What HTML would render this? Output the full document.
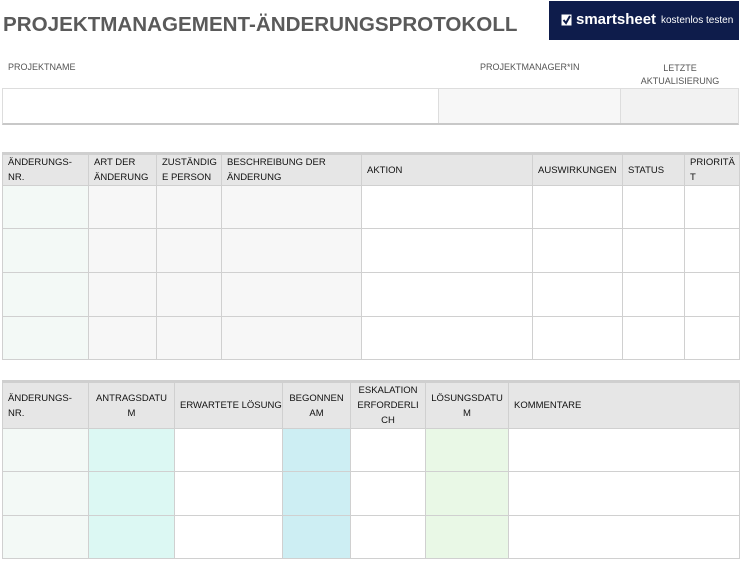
<!DOCTYPE html><html><head><meta charset="utf-8"><style>
body{margin:0;width:742px;height:561px;background:#fff;position:relative;overflow:hidden;font-family:"Liberation Sans",sans-serif;}
.a{position:absolute;box-sizing:border-box;}
.t{position:absolute;left:3px;top:13px;font-size:20.6px;font-weight:bold;color:#5a5a5a;white-space:nowrap;}
.lbl{position:absolute;font-size:9px;color:#555;}
table{position:absolute;border-collapse:collapse;table-layout:fixed;}
td{border:1px solid #d0d0d0;padding:0 0 0 5px;box-sizing:border-box;vertical-align:middle;font-size:9px;color:#222;line-height:15px;}
th{border:1px solid #d0d0d0;background:#e6e6e6;font-size:9.5px;font-weight:normal;color:#111;line-height:15px;text-align:left;padding:0 0 0 5px;vertical-align:middle;}
.g1{background:#f3f9f6}.g2{background:#f7f7f7}.c1{background:#dcf8f3}.c2{background:#cdeef3}.c3{background:#e9f8e6}
</style></head><body>
<div class="t">PROJEKTMANAGEMENT-ÄNDERUNGSPROTOKOLL</div>
<div class="a" style="left:549px;top:1px;width:190px;height:39px;background:#0e1c4b;color:#fff;">
<svg class="a" style="left:12px;top:13px" width="11" height="12" viewBox="0 0 11 12"><rect x="0.5" y="0.5" width="10" height="11" fill="#fff"/><path d="M2.5 6 L5 9 L9 2" stroke="#0e1c4b" stroke-width="2" fill="none"/></svg>
<span class="a" style="left:27px;top:10px;font-size:15px;font-weight:bold;">smartsheet</span>
<span class="a" style="left:112px;top:14px;font-size:10px;">kostenlos testen</span></div>
<div class="lbl" style="left:8px;top:62px">PROJEKTNAME</div>
<div class="lbl" style="left:480px;top:62px">PROJEKTMANAGER*IN</div>
<div class="lbl" style="left:620px;top:62px;width:120px;text-align:center;line-height:13px">LETZTE<br>AKTUALISIERUNG</div>
<div class="a" style="left:2px;top:88px;width:737px;height:37px;border:1px solid #ddd;border-bottom:2px solid #c8c8c8"></div>
<div class="a" style="left:438px;top:89px;width:182px;height:34px;background:#f7f7f7;border-left:1px solid #ddd"></div>
<div class="a" style="left:620px;top:89px;width:118px;height:34px;background:#f2f2f2;border-left:1px solid #ddd"></div>

<table style="left:2px;top:152px;width:737px;border-top:3px solid #cfcfcf">
<colgroup><col style="width:86px"><col style="width:68px"><col style="width:65px"><col style="width:140px"><col style="width:171px"><col style="width:90px"><col style="width:62px"><col style="width:55px"></colgroup>
<tr style="height:31px"><th>ÄNDERUNGS-<br>NR.</th><th>ART DER<br>ÄNDERUNG</th><th>ZUSTÄNDIG<br>E PERSON</th><th>BESCHREIBUNG DER<br>ÄNDERUNG</th><th>AKTION</th><th>AUSWIRKUNGEN</th><th>STATUS</th><th>PRIORITÄ<br>T</th></tr>
<tr style="height:43px"><td class="g1"></td><td class="g2"></td><td class="g2"></td><td class="g2"></td><td></td><td></td><td></td><td></td></tr>
<tr style="height:44px"><td class="g1"></td><td class="g2"></td><td class="g2"></td><td class="g2"></td><td></td><td></td><td></td><td></td></tr>
<tr style="height:44px"><td class="g1"></td><td class="g2"></td><td class="g2"></td><td class="g2"></td><td></td><td></td><td></td><td></td></tr>
<tr style="height:43px"><td class="g1"></td><td class="g2"></td><td class="g2"></td><td class="g2"></td><td></td><td></td><td></td><td></td></tr>
</table>

<table style="left:2px;top:380px;width:737px;border-top:3px solid #cfcfcf">
<colgroup><col style="width:86px"><col style="width:86px"><col style="width:108px"><col style="width:68px"><col style="width:75px"><col style="width:83px"><col style="width:231px"></colgroup>
<tr style="height:45px"><th>ÄNDERUNGS-<br>NR.</th><th style="text-align:center;padding:0">ANTRAGSDATU<br>M</th><th>ERWARTETE LÖSUNG</th><th style="text-align:center;padding:0">BEGONNEN<br>AM</th><th style="text-align:center;padding:0">ESKALATION<br>ERFORDERLI<br>CH</th><th style="text-align:center;padding:0">LÖSUNGSDATU<br>M</th><th>KOMMENTARE</th></tr>
<tr style="height:43px"><td class="g1"></td><td class="c1"></td><td></td><td class="c2"></td><td></td><td class="c3"></td><td></td></tr>
<tr style="height:44px"><td class="g1"></td><td class="c1"></td><td></td><td class="c2"></td><td></td><td class="c3"></td><td></td></tr>
<tr style="height:43px"><td class="g1"></td><td class="c1"></td><td></td><td class="c2"></td><td></td><td class="c3"></td><td></td></tr>
</table>
</body></html>
